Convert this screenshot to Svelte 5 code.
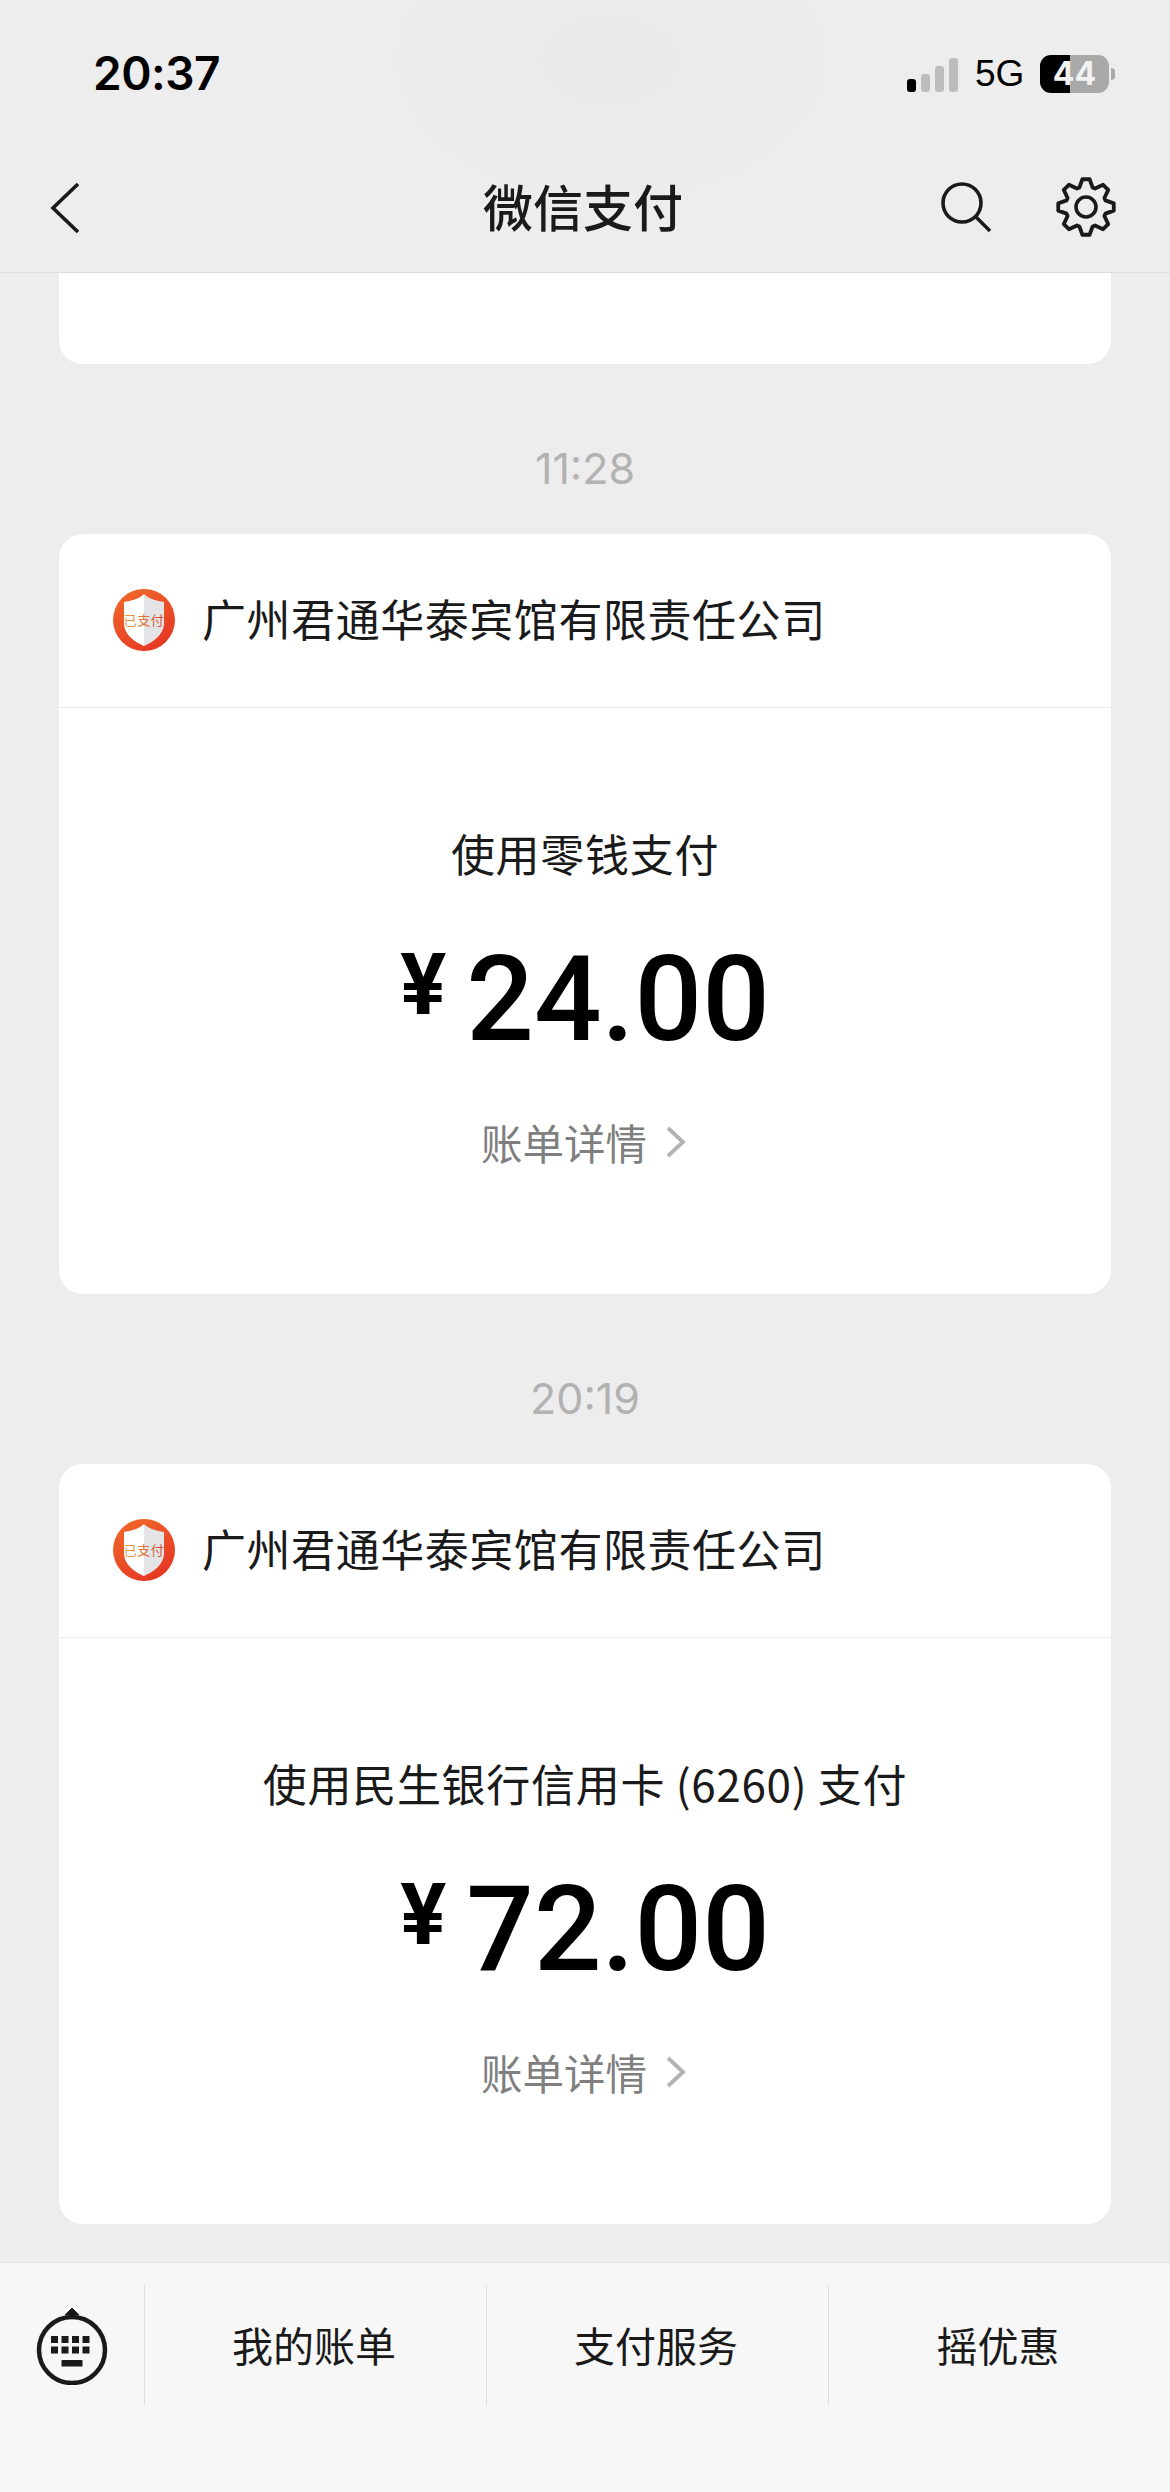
<script>
  const teeth = 8;
  const gear = (() => {
    const pts = [];
    for (let i = 0; i < teeth; i++) {
      const a = (i * 2 * Math.PI) / teeth - Math.PI / 2;
      const p = (r, d) => `${(30 + r * Math.cos(a + d)).toFixed(2)} ${(30 + r * Math.sin(a + d)).toFixed(2)}`;
      pts.push(p(20.5, -0.33), p(28, -0.13), p(28, 0.13), p(20.5, 0.33));
    }
    return 'M' + pts.join('L') + 'Z';
  })();

  const cards = [
    { time: '11:28', method: '使用零钱支付', amount: '24.00' },
    { time: '20:19', method: '使用民生银行信用卡 (6260) 支付', amount: '72.00' }
  ];
  const keys = [0, 1, 2, 3];
</script>

<div class="page">
  <header class="top">
    <div class="status">
      <span class="clock">20:37</span>
      <div class="status-right">
        <div class="signal">
          <i class="bar on b1"></i><i class="bar b2"></i><i class="bar b3"></i><i class="bar b4"></i>
        </div>
        <span class="net">5G</span>
        <div class="battery"><span>44</span></div>
        <i class="nub"></i>
      </div>
    </div>
    <nav class="nav">
      <svg class="back" viewBox="0 0 30 50" width="30" height="50" aria-hidden="true">
        <path d="M28 1 3 25 28 49" fill="none" stroke="#1a1a1a" stroke-width="3.600" />
      </svg>
      <h1>微信支付</h1>
      <svg class="search" viewBox="0 0 52 52" width="52" height="52" aria-hidden="true">
        <circle cx="21" cy="21" r="19" fill="none" stroke="#1a1a1a" stroke-width="3.600" />
        <path d="M34.500 34.500 49 49" fill="none" stroke="#1a1a1a" stroke-width="3.600" />
      </svg>
      <svg class="gear" viewBox="0 0 60 60" width="60" height="60" aria-hidden="true">
        <path d={gear} fill="none" stroke="#1a1a1a" stroke-width="3.800" stroke-linejoin="round" />
        <circle cx="30" cy="30" r="10" fill="none" stroke="#1a1a1a" stroke-width="3.600" />
      </svg>
    </nav>
  </header>

  <main class="feed">
    <div class="card stub"></div>
    {#each cards as c}
      <div class="time">{c.time}</div>
      <section class="card">
        <div class="merchant">
          <svg class="logo" viewBox="0 0 62 62" width="62" height="62" aria-hidden="true">
            <defs>
              <linearGradient id="ring" x1="0.2" y1="0" x2="0.8" y2="1">
                <stop offset="0" stop-color="#f0682a" />
                <stop offset="1" stop-color="#e53423" />
              </linearGradient>
              <linearGradient id="mark" x1="0" y1="0" x2="1" y2="0">
                <stop offset="0" stop-color="#e6a040" />
                <stop offset="1" stop-color="#d6452c" />
              </linearGradient>
            </defs>
            <circle cx="31" cy="31" r="31" fill="url(#ring)" />
            <path d="M31 5C26 10 18 12 11 13V34C11 46 22 53 31 57Z" fill="#fff" />
            <path d="M31 5C36 10 44 12 51 13V34C51 46 40 53 31 57Z" fill="#e4e4e6" />
            <text x="31" y="36" text-anchor="middle" class="logo-text">已支付</text>
          </svg>
          <span>广州君通华泰宾馆有限责任公司</span>
        </div>
        <div class="body">
          <div class="method">{c.method}</div>
          <div class="amount"><span class="yen">¥</span><span class="num">{c.amount}</span></div>
          <div class="detail">
            <span>账单详情</span>
            <svg viewBox="0 0 20 32" width="20" height="32" aria-hidden="true">
              <path d="M2 2 17 16 2 30" fill="none" stroke="#b2b2b2" stroke-width="3.800" />
            </svg>
          </div>
        </div>
      </section>
    {/each}
  </main>

  <footer class="tools">
    <div class="kbd">
      <svg viewBox="0 0 72 84" width="72" height="84" aria-hidden="true">
        <path d="M29 14 36 7 43 14Z" fill="#1a1a1a" stroke="#1a1a1a" stroke-width="1" />
        <circle cx="36" cy="49" r="33" fill="none" stroke="#1a1a1a" stroke-width="4.500" />
        {#each keys as k}
          <rect x={15 + k * 10.500} y="35" width="7" height="7" fill="#1a1a1a" />
          <rect x={15 + k * 10.500} y="45.500" width="7" height="7" fill="#1a1a1a" />
        {/each}
        <rect x="25.500" y="59" width="21" height="6.500" fill="#1a1a1a" />
      </svg>
    </div>
    <div class="tool">我的账单</div>
    <div class="tool">支付服务</div>
    <div class="tool">摇优惠</div>
  </footer>
</div>

<style>
  :global(body) {
    margin: 0;
    background: #ededed;
  }

  .page {
    width: 1170px;
    height: 2492px;
    display: flex;
    flex-direction: column;
    font-family: "Noto Sans CJK SC", "Noto Sans", sans-serif;
    color: #1a1a1a;
    background: #ededed;
    overflow: hidden;
  }

  .top {
    height: 273px;
    box-sizing: border-box;
    border-bottom: 1px solid #dcdcdc;
    background: radial-gradient(ellipse 260px 170px at 610px 60px, #e9e9e9 0%, #ededed 100%);
    flex: none;
  }

  .status {
    height: 148px;
    box-sizing: border-box;
    padding: 49px 55px 0 93px;
    display: flex;
    justify-content: space-between;
    align-items: flex-start;
  }

  .clock {
    font-family: Inter, "Liberation Sans", sans-serif;
    font-size: 46px;
    line-height: 48px;
    font-weight: 600;
    color: #000;
    letter-spacing: -0.500px;
  }

  .status-right {
    display: flex;
    align-items: center;
    margin-top: 6px;
  }

  .signal {
    display: flex;
    align-items: flex-end;
    gap: 5px;
    height: 34px;
    margin-top: 2px;
  }

  .bar {
    width: 9px;
    border-radius: 3px;
    background: #bdbdbd;
    display: block;
  }
  .on { background: #000; }
  .b1 { height: 13px; }
  .b2 { height: 18px; }
  .b3 { height: 26px; }
  .b4 { height: 34px; }

  .net {
    font-family: "Liberation Sans", sans-serif;
    font-size: 37px;
    line-height: 38px;
    color: #000;
    margin-left: 17px;
    width: 65px;
  }

  .battery {
    width: 69px;
    height: 38px;
    border-radius: 11px;
    background: linear-gradient(90deg, #000 0 30px, #a9a9a9 30px 100%);
    display: flex;
    align-items: center;
    justify-content: center;
  }

  .battery span {
    font-family: Inter, "Liberation Sans", sans-serif;
    font-size: 32px;
    line-height: 38px;
    font-weight: 700;
    color: #f2f2f2;
  }

  .nub {
    display: block;
    width: 4px;
    height: 12px;
    margin-left: 2px;
    border-radius: 0 6px 6px 0;
    background: #a9a9a9;
  }

  .nav {
    height: 124px;
    position: relative;
  }

  .nav svg { position: absolute; }
  .back { left: 50px; top: 35px; }
  .search { left: 941px; top: 34px; }
  .gear { left: 1056px; top: 29px; }

  h1 {
    margin: 0;
    text-align: center;
    font-size: 50px;
    font-weight: 500;
    line-height: 115px;
    color: #1a1a1a;
    transform: translateX(-2px);
  }

  .feed {
    flex: 1;
    padding: 0 59px;
    min-height: 0;
  }

  .card {
    background: #fff;
    border-radius: 24px;
  }

  .stub {
    height: 91px;
    border-radius: 0 0 24px 24px;
  }

  .time {
    height: 170px;
    box-sizing: border-box;
    padding-top: 80px;
    text-align: center;
    font-family: Inter, "Liberation Sans", sans-serif;
    font-size: 43px;
    line-height: 48px;
    color: #b2b2b2;
  }

  .merchant {
    height: 174px;
    box-sizing: border-box;
    padding-left: 54px;
    padding-bottom: 5px;
    display: flex;
    align-items: center;
    gap: 27px;
    border-bottom: 1px solid #ececec;
    font-size: 44px;
    letter-spacing: 0.550px;
    color: #1a1a1a;
  }

  .logo { flex: none; margin-top: 3px; }

  .logo-text {
    font-size: 13px;
    fill: url(#mark);
  }

  .body {
    height: 586px;
    display: flex;
    flex-direction: column;
    align-items: center;
  }

  .method {
    margin-top: 115px;
    font-size: 44px;
    line-height: 60px;
    letter-spacing: 0.700px;
  }

  .amount {
    margin-top: 37px;
    height: 160px;
    display: flex;
    align-items: flex-start;
    color: #000;
    font-family: Roboto, "Liberation Sans", sans-serif;
  }

  .yen {
    font-size: 86px;
    font-weight: 700;
    line-height: 100px;
    margin-top: 15px;
    margin-right: 20px;
  }

  .num {
    font-size: 119px;
    font-weight: 500;
    line-height: 160px;
  }

  .detail {
    margin-top: 34px;
    margin-left: -3px;
    display: flex;
    align-items: center;
    gap: 19px;
    color: #7f7f7f;
    font-size: 41.500px;
    line-height: 56px;
  }

  .tools {
    height: 230px;
    box-sizing: border-box;
    flex: none;
    border-top: 1px solid #dedede;
    background: #f7f7f7;
    display: grid;
    grid-template-columns: 144px 342px 342px 342px;
    padding-top: 22px;
  }

  .kbd {
    height: 120px;
    display: flex;
    align-items: center;
    justify-content: center;
  }

  .kbd svg { margin-top: -5px; }

  .tool {
    height: 120px;
    border-left: 1px solid #dedede;
    display: flex;
    align-items: center;
    justify-content: center;
    padding-bottom: 3px;
    padding-right: 3px;
    box-sizing: border-box;
    font-size: 41px;
    color: #1a1a1a;
  }
</style>
